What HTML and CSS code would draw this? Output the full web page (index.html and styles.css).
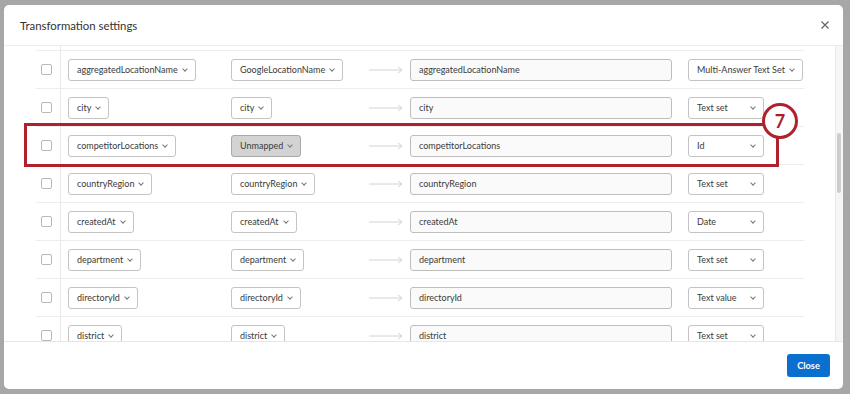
FILE: index.html
```html
<!DOCTYPE html>
<html lang="en">
<head>
  <meta charset="UTF-8">
  <title>Transformation settings</title>
  <link rel="stylesheet" href="styles.css">
</head>
<body>
  <div class="modal">
    <header class="modal-head">
      <h1>Transformation settings</h1>
      <button class="close-x" aria-label="close">
        <svg width="8" height="8" viewBox="0 0 8 8"><path d="M0.5 0.5L7.5 7.5M7.5 0.5L0.5 7.5" stroke="#666" stroke-width="1.2" fill="none"/></svg>
      </button>
    </header>

    <div class="modal-body">
      <div class="rows">
        <div class="row">
          <span class="cb"></span>
          <div class="cell"><span class="dd">aggregatedLocationName<i class="chev"></i></span></div>
          <div class="cell"><span class="dd">GoogleLocationName<i class="chev"></i></span></div>
          <div class="cell arrow"><svg width="34" height="8" viewBox="0 0 34 8"><path d="M0 4H33M29 1L33 4L29 7" stroke="#d2d2d2" fill="none"/></svg></div>
          <div class="field">aggregatedLocationName</div>
          <div class="cell type"><span class="dd">Multi-Answer Text Set<i class="chev"></i></span></div>
        </div>
        <div class="row">
          <span class="cb"></span>
          <div class="cell"><span class="dd">city<i class="chev"></i></span></div>
          <div class="cell"><span class="dd">city<i class="chev"></i></span></div>
          <div class="cell arrow"><svg width="34" height="8" viewBox="0 0 34 8"><path d="M0 4H33M29 1L33 4L29 7" stroke="#d2d2d2" fill="none"/></svg></div>
          <div class="field">city</div>
          <div class="cell type"><span class="dd fixed">Text set<i class="chev"></i></span></div>
        </div>
        <div class="row">
          <span class="cb"></span>
          <div class="cell"><span class="dd">competitorLocations<i class="chev"></i></span></div>
          <div class="cell"><span class="dd unmapped">Unmapped<i class="chev"></i></span></div>
          <div class="cell arrow"><svg width="34" height="8" viewBox="0 0 34 8"><path d="M0 4H33M29 1L33 4L29 7" stroke="#d2d2d2" fill="none"/></svg></div>
          <div class="field">competitorLocations</div>
          <div class="cell type"><span class="dd fixed">Id<i class="chev"></i></span></div>
        </div>
        <div class="row">
          <span class="cb"></span>
          <div class="cell"><span class="dd">countryRegion<i class="chev"></i></span></div>
          <div class="cell"><span class="dd">countryRegion<i class="chev"></i></span></div>
          <div class="cell arrow"><svg width="34" height="8" viewBox="0 0 34 8"><path d="M0 4H33M29 1L33 4L29 7" stroke="#d2d2d2" fill="none"/></svg></div>
          <div class="field">countryRegion</div>
          <div class="cell type"><span class="dd fixed">Text set<i class="chev"></i></span></div>
        </div>
        <div class="row">
          <span class="cb"></span>
          <div class="cell"><span class="dd">createdAt<i class="chev"></i></span></div>
          <div class="cell"><span class="dd">createdAt<i class="chev"></i></span></div>
          <div class="cell arrow"><svg width="34" height="8" viewBox="0 0 34 8"><path d="M0 4H33M29 1L33 4L29 7" stroke="#d2d2d2" fill="none"/></svg></div>
          <div class="field">createdAt</div>
          <div class="cell type"><span class="dd fixed">Date<i class="chev"></i></span></div>
        </div>
        <div class="row">
          <span class="cb"></span>
          <div class="cell"><span class="dd">department<i class="chev"></i></span></div>
          <div class="cell"><span class="dd">department<i class="chev"></i></span></div>
          <div class="cell arrow"><svg width="34" height="8" viewBox="0 0 34 8"><path d="M0 4H33M29 1L33 4L29 7" stroke="#d2d2d2" fill="none"/></svg></div>
          <div class="field">department</div>
          <div class="cell type"><span class="dd fixed">Text set<i class="chev"></i></span></div>
        </div>
        <div class="row">
          <span class="cb"></span>
          <div class="cell"><span class="dd">directoryId<i class="chev"></i></span></div>
          <div class="cell"><span class="dd">directoryId<i class="chev"></i></span></div>
          <div class="cell arrow"><svg width="34" height="8" viewBox="0 0 34 8"><path d="M0 4H33M29 1L33 4L29 7" stroke="#d2d2d2" fill="none"/></svg></div>
          <div class="field">directoryId</div>
          <div class="cell type"><span class="dd fixed">Text value<i class="chev"></i></span></div>
        </div>
        <div class="row">
          <span class="cb"></span>
          <div class="cell"><span class="dd">district<i class="chev"></i></span></div>
          <div class="cell"><span class="dd">district<i class="chev"></i></span></div>
          <div class="cell arrow"><svg width="34" height="8" viewBox="0 0 34 8"><path d="M0 4H33M29 1L33 4L29 7" stroke="#d2d2d2" fill="none"/></svg></div>
          <div class="field">district</div>
          <div class="cell type"><span class="dd fixed">Text set<i class="chev"></i></span></div>
        </div>
      </div>
      <div class="scroll-track"><div class="thumb"></div></div>
    </div>

    <footer class="modal-foot">
      <button class="btn-close">Close</button>
    </footer>
  </div>

  <!-- step annotation -->
  <div class="callout-box"></div>
  <div class="callout-num">7</div>
</body>
</html>
```

FILE: styles.css
```css
* { margin: 0; padding: 0; box-sizing: border-box; }
body {
  font-family: Lato, 'Open Sans', sans-serif;
  background: #a7a7a7;
  color: #3a3a3a;
  width: 850px;
  height: 394px;
  overflow: hidden;
  position: relative;
}
.modal {
  margin: 5px 0 0 4px;
  width: 839px;
  height: 384px;
  background: #fff;
  border-radius: 5px;
  display: flex;
  flex-direction: column;
  overflow: hidden;
}
.modal-head {
  height: 41px;
  flex: none;
  display: flex;
  align-items: center;
  justify-content: space-between;
  padding: 0 14px 0 16px;
  border-bottom: 1px solid #ececec;
}
.modal-head h1 { font-size: 11.4px; font-weight: 400; color: #333; }
.close-x { background: none; border: none; display: flex; }

.modal-body { flex: 1; display: flex; min-height: 0; }
.rows {
  flex: 1;
  overflow: hidden;
  padding: 4px 0 0 32px;
  background: linear-gradient(#e8e8e8, #e8e8e8) 56px 0 / 1px 100% no-repeat;
}
.row {
  width: 768px;
  height: 38px;
  border-top: 1px solid #ededed;
  display: grid;
  grid-template-columns: 25px 170px 138px 41px 262px auto;
  align-items: center;
  font-size: 9px;
}
.cb {
  width: 11px;
  height: 11px;
  margin-left: 5px;
  border: 1px solid #b8b8b8;
  border-radius: 2px;
  background: #fff;
}
.row .cell:nth-child(2) { padding-left: 7px; }
.dd {
  display: inline-flex;
  align-items: center;
  height: 22px;
  padding: 0 7px 0 8px;
  border: 1px solid #c4c4c4;
  border-radius: 3px;
  background: #fff;
  white-space: nowrap;
}
.dd.unmapped { background: #d3d3d3; border-color: #a9a9a9; }
.dd.fixed { width: 76px; justify-content: space-between; }
.chev {
  width: 4px;
  height: 4px;
  margin: -2px 1px 0 5px;
  border-right: 1px solid #777;
  border-bottom: 1px solid #777;
  transform: rotate(45deg);
}
.arrow { display: flex; align-items: center; }
.field {
  height: 22px;
  display: flex;
  align-items: center;
  padding-left: 8px;
  border: 1px solid #bdbdbd;
  border-radius: 3px;
  background: #fafafa;
}
.type { padding-left: 16px; }

.scroll-track {
  width: 8px;
  flex: none;
  background: #f6f6f6;
  border-left: 1px solid #e9e9e9;
  padding: 87px 0 0 1px;
}
.thumb { width: 4px; height: 60px; border-radius: 2px; background: #cdcdcd; }

.modal-foot {
  height: 48px;
  flex: none;
  border-top: 1px solid #e6e6e6;
  display: flex;
  justify-content: flex-end;
  align-items: flex-start;
  padding: 12px 13px 0 0;
}
.btn-close {
  width: 43px;
  height: 23px;
  background: #0b6fd0;
  color: #fff;
  border: none;
  border-radius: 3px;
  font-family: inherit;
  font-size: 9.2px;
  font-weight: 700;
}

.callout-box {
  position: absolute;
  left: 24px;
  top: 123px;
  width: 755px;
  height: 44px;
  border: 3px solid #b0202d;
}
.callout-num {
  position: absolute;
  left: 762px;
  top: 103px;
  width: 36px;
  height: 36px;
  border: 3px solid #b0202d;
  border-radius: 50%;
  background: #fff;
  color: #a81f2b;
  font-size: 18px;
  font-weight: 700;
  display: flex;
  align-items: center;
  justify-content: center;
}
```
